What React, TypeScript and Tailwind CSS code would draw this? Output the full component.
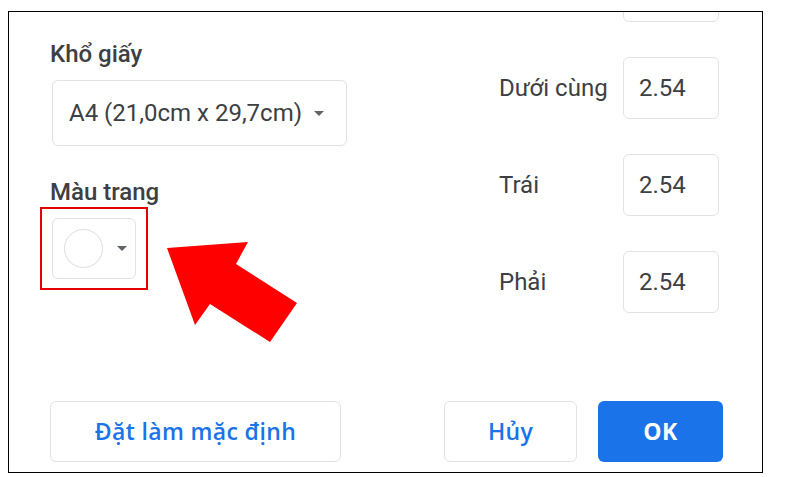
import { ReactNode } from "react";

const font = { fontFamily: "Roboto, 'Noto Sans', sans-serif" };
const btnFont = { fontFamily: "'Open Sans', Roboto, sans-serif" };

function Caret({ className = "" }: { className?: string }) {
  return (
    <svg viewBox="0 0 10 5" className={`w-[10px] h-[5px] ${className}`}>
      <path d="M0 0h10L5 5z" fill="#5f6368" />
    </svg>
  );
}

function MarginRow({ label, value }: { label?: string; value: string }) {
  return (
    <div className="flex items-center h-[62px]">
      <span className="w-[124px] text-[24px] leading-[28px] text-[#3c4043]">{label}</span>
      <div className="w-[96px] h-[62px] rounded-[6px] border border-[#e2e2e2] flex items-center pl-[15px] text-[24px] leading-[28px] text-[#3c4043]">
        {value}
      </div>
    </div>
  );
}

function Button({ children, primary, className = "" }: { children: ReactNode; primary?: boolean; className?: string }) {
  return (
    <button
      style={btnFont}
      className={`h-[61px] rounded-[6px] text-[23px] tracking-[0.015em] flex items-center justify-center ${
        primary ? "bg-[#1a73e8] text-white" : "border border-[#e2e2e2] text-[#1a73e8] bg-white"
      } ${className}`}
    >
      {children}
    </button>
  );
}

export default function App() {
  return (
    <div className="w-[809px] h-[477px] bg-white pt-[11px] pl-[8px]" style={font}>
      <div className="relative w-[755px] h-[462px] border border-black overflow-hidden flex flex-col">
        <div className="flex flex-1">
          {/* left column */}
          <div className="pl-[41px] pt-[28px] w-[450px]">
            <div className="text-[24px] leading-[28px] font-medium text-[#3c4043]">Khổ giấy</div>
            <div className="mt-[12px] ml-[2px] w-[295px] h-[66px] rounded-[6px] border border-[#e2e2e2] flex items-center pl-[16px] text-[24px] leading-[28px] text-[#3c4043]">
              <span>A4 (21,0cm x 29,7cm)</span>
              <Caret className="ml-[12px]" />
            </div>

            <div className="mt-[32px] text-[24px] leading-[28px] font-medium text-[#3c4043]">Màu trang</div>
            <div className="relative mt-[12px] ml-[2px] w-[84px] h-[61px] rounded-[6px] border border-[#e2e2e2] flex items-center pl-[11px]">
              <div className="w-[39px] h-[39px] rounded-full border border-[#dcdcdc]" />
              <Caret className="ml-[14px]" />
              <div className="absolute -left-[13px] -top-[12px] w-[108px] h-[83px] border-2 border-[#e30000]" />
            </div>
          </div>

          {/* right column */}
          <div className="-mt-[52px] pl-[40px] flex flex-col gap-[35px]">
            <MarginRow value="" />
            <MarginRow label="Dưới cùng" value="2.54" />
            <MarginRow label="Trái" value="2.54" />
            <MarginRow label="Phải" value="2.54" />
          </div>
        </div>

        {/* footer */}
        <div className="flex items-center justify-between pl-[41px] pr-[39px] pb-[10px]">
          <Button className="w-[291px] font-semibold">Đặt làm mặc định</Button>
          <div className="flex gap-[21px]">
            <Button className="w-[133px] font-semibold">Hủy</Button>
            <Button primary className="w-[125px] font-bold">
              OK
            </Button>
          </div>
        </div>

        {/* annotation arrow */}
        <svg className="absolute left-[151px] top-[224px] w-[145px] h-[115px]" viewBox="0 0 145 115">
          <polygon points="7,12 88,6 76,28 137,67 110,106 50,68 35,89" fill="#fe0000" />
        </svg>
      </div>
    </div>
  );
}
